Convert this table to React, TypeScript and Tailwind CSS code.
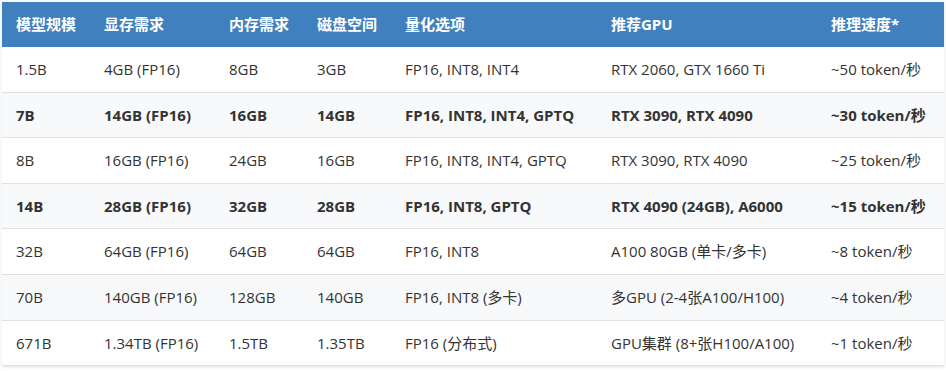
import React from 'react';

const headers = ['模型规模', '显存需求', '内存需求', '磁盘空间', '量化选项', '推荐GPU', '推理速度*'];
const widths = ['w-[88px]', 'w-[125px]', 'w-[88px]', 'w-[88px]', 'w-[206px]', 'w-[220px]', 'w-[127px]'];

const rows: string[][] = [
  ['1.5B', '4GB (FP16)', '8GB', '3GB', 'FP16, INT8, INT4', 'RTX 2060, GTX 1660 Ti', '~50 token/秒'],
  ['7B', '14GB (FP16)', '16GB', '14GB', 'FP16, INT8, INT4, GPTQ', 'RTX 3090, RTX 4090', '~30 token/秒'],
  ['8B', '16GB (FP16)', '24GB', '16GB', 'FP16, INT8, INT4, GPTQ', 'RTX 3090, RTX 4090', '~25 token/秒'],
  ['14B', '28GB (FP16)', '32GB', '28GB', 'FP16, INT8, GPTQ', 'RTX 4090 (24GB), A6000', '~15 token/秒'],
  ['32B', '64GB (FP16)', '64GB', '64GB', 'FP16, INT8', 'A100 80GB (单卡/多卡)', '~8 token/秒'],
  ['70B', '140GB (FP16)', '128GB', '140GB', 'FP16, INT8 (多卡)', '多GPU (2-4张A100/H100)', '~4 token/秒'],
  ['671B', '1.34TB (FP16)', '1.5TB', '1.35TB', 'FP16 (分布式)', 'GPU集群 (8+张H100/A100)', '~1 token/秒'],
];

// rows 2 and 4 are highlighted in bold
const boldRows = [1, 3];

export default function App() {
  return (
    <div className="bg-white pt-[2px] pl-[2px] w-[946px] h-[371px] font-['Open_Sans','Noto_Sans_CJK_SC',sans-serif] text-[15px] text-[#333]">
      <table className="table-fixed border-collapse w-[942px] shadow-[0_1px_3px_rgba(0,0,0,0.12)]">
        <colgroup>
          {widths.map((w, i) => <col key={i} className={w} />)}
        </colgroup>
        <thead>
          <tr className="bg-[#4080bf] text-white">
            {headers.map(h => (
              <th key={h} className="text-left font-bold px-[14px] py-3 leading-[21px]">{h}</th>
            ))}
          </tr>
        </thead>
        <tbody>
          {rows.map((r, i) => (
            <tr key={i} className={`border-b border-[#e0e0e0] ${i % 2 === 1 ? 'bg-[#f8f9fa]' : 'bg-white'} ${boldRows.includes(i) ? 'font-bold' : ''}`}>
              {r.map((c, j) => (
                <td key={j} className="px-[14px] py-3 leading-[20.6px] whitespace-nowrap">{c}</td>
              ))}
            </tr>
          ))}
        </tbody>
      </table>
    </div>
  );
}
